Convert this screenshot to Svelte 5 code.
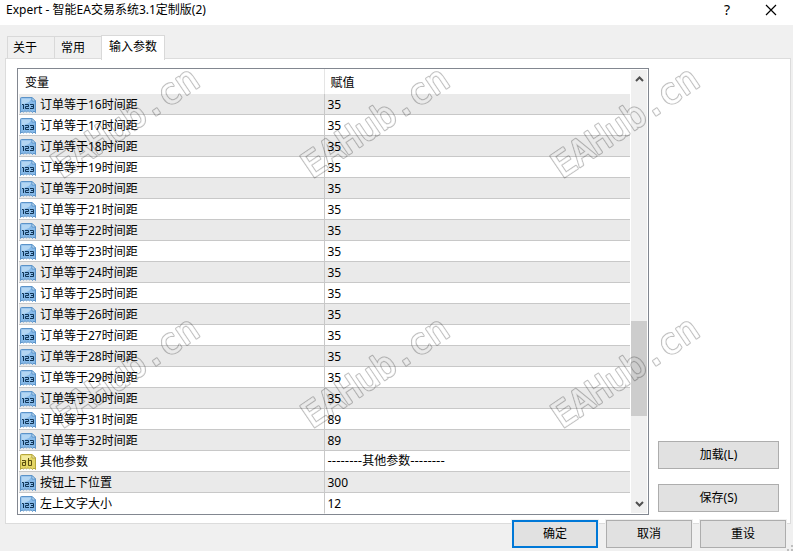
<script lang="ts">
	type Param = { name: string; value: string; kind: 'int' | 'text' };

	const params: Param[] = [];
	for (let i = 16; i <= 32; i++) {
		params.push({ name: `订单等于${i}时间距`, value: i > 30 ? '89' : '35', kind: 'int' });
	}
	params.push({ name: '其他参数', value: '--------其他参数--------', kind: 'text' });
	params.push({ name: '按钮上下位置', value: '300', kind: 'int' });
	params.push({ name: '左上文字大小', value: '12', kind: 'int' });

	const tabs = ['关于', '常用', '输入参数'];
	let active: number = $state(2);

	const marks = [0, 250].flatMap((y) => [0, 250, 500].map((x) => ({ x, y })));
</script>

<div class="dialog">
	<header>
		<h1>Expert - 智能EA交易系统3.1定制版(2)</h1>
		<button class="caption" aria-label="帮助">?</button>
		<button class="caption" aria-label="关闭">
			<svg width="12" height="12" viewBox="0 0 12 12">
				<path d="M1 1L11 11M11 1L1 11" fill="none" stroke="#000" stroke-width="1.2" />
			</svg>
		</button>
	</header>

	<div class="tabs" role="tablist">
		{#each tabs as tab, i}
			<button
				role="tab"
				aria-selected={active === i}
				class:active={active === i}
				onclick={() => (active = i)}>{tab}</button
			>
		{/each}
	</div>

	<main>
		<div class="list">
			<table>
				<thead>
					<tr><th class="name">变量</th><th>赋值</th></tr>
				</thead>
				<tbody>
					{#each params as param}
						<tr>
							<td class="name">
								<div class="label">
									<svg width="16" height="16" viewBox="0 0 16 16" class={param.kind}>
										<path
											class="page"
											d="M.5 1.5Q.5.5 1.5.5H12L15.5 4V15.5L14 14L12.5 15.5L11 13.8L9.5 14.8L8 13.8L6.5 14.8L5 13.8L3.5 15L2 14L.5 15.5Z"
										/>
										<path class="shine" d="M1.5 1.5H11.5L9 5L1.5 8Z" />
										<path class="fold" d="M12 .5V4H15.5Z" />
										{#if param.kind === 'int'}
											<path
												class="glyph"
												d="M2 7.5H3.5V12M5 7.5H8.5V9.5H5.5V11.5H9M10 7.5H13.5V11.5H10M11 9.5H13.5"
											/>
										{:else}
											<path
												class="glyph"
												d="M2 6.5H5.5V11.5H2.5V8.5H5.5M8.5 4V11.5H11.5V6.5H8.5"
											/>
										{/if}
									</svg>
									{param.name}
								</div>
							</td>
							<td class={param.kind}>{param.value}</td>
						</tr>
					{/each}
				</tbody>
			</table>

			<div class="scrollbar">
				<button aria-label="向上">
					<svg width="9" height="6" viewBox="0 0 9 6"><path d="M1 5L4.5 1.5L8 5" /></svg>
				</button>
				<div class="before"></div>
				<div class="thumb"></div>
				<div class="after"></div>
				<button aria-label="向下">
					<svg width="9" height="6" viewBox="0 0 9 6"><path d="M1 1L4.5 4.5L8 1" /></svg>
				</button>
			</div>
		</div>

		<div class="side">
			<button class="push">加载(L)</button>
			<button class="push">保存(S)</button>
		</div>
	</main>

	<footer>
		<button class="push default">确定</button>
		<button class="push">取消</button>
		<button class="push">重设</button>
	</footer>

	<svg class="grip" width="6" height="6" viewBox="0 0 6 6" aria-hidden="true">
		<path d="M4 0H6V2H4ZM4 4H6V6H4ZM0 4H2V6H0Z" fill="#bfbfbf" />
	</svg>

	<svg class="watermark" aria-hidden="true">
		<defs>
			<!-- a hollow outline running around the letters -->
			<mask id="hollow" maskUnits="userSpaceOnUse" x="-10" y="-40" width="200" height="60">
				<text fill="#fff" stroke="#fff" stroke-width="2.4">EAHub.cn</text>
				<text fill="#000" stroke="#000" stroke-width="0.4">EAHub.cn</text>
			</mask>
		</defs>
		{#each marks as mark}
			<g transform="translate({mark.x + 62} {mark.y + 179}) rotate(-34)">
				<rect x="-10" y="-40" width="200" height="60" mask="url(#hollow)" />
			</g>
		{/each}
	</svg>
</div>

<style>
	:global(body) {
		margin: 0;
		background: #f0f0f0;
	}

	.dialog {
		position: relative;
		display: flex;
		flex-direction: column;
		min-height: 100vh;
		box-sizing: border-box;
		overflow: hidden;
		background: #f0f0f0;
		color: #000;
		font: 12px/20px 'Noto Sans', 'Noto Sans CJK SC', sans-serif;
	}

	button {
		margin: 0;
		padding: 0;
		border: 0;
		background: none;
		color: inherit;
		font: inherit;
	}

	header {
		display: flex;
		align-items: center;
		height: 25px;
		background: #fff;
	}

	h1 {
		flex: 1;
		margin: 0 0 5px 6px;
		font: inherit;
	}

	.caption {
		display: flex;
		align-items: center;
		justify-content: center;
		width: 44px;
		height: 20px;
		margin-bottom: 6px;
		font-size: 14px;
	}

	.tabs {
		display: flex;
		align-items: flex-end;
		height: 25px;
		padding: 9px 7px 0;
	}

	.tabs button {
		height: 23px;
		padding: 0 17px 0 5px;
		border: 1px solid #d9d9d9;
		border-width: 1px 0 0 1px;
		text-align: left;
	}

	.tabs button + button {
		padding-left: 6px;
		padding-right: 16px;
	}

	.tabs .active {
		position: relative;
		height: 25px;
		margin-bottom: -1px;
		padding: 0 7px 2px !important;
		border-right-width: 1px;
		background: #fff;
	}

	main {
		display: flex;
		gap: 9px;
		margin: -1px 2px 0 5px;
		padding: 9px 11px 8px 11px;
		border: 1px solid #dcdcdc;
		background: #fff;
	}

	.list {
		display: flex;
		flex: 1;
		gap: 1px;
		padding: 0 1px;
		border: 1px solid #828790;
	}

	table {
		flex: 1;
		border-collapse: separate;
		border-spacing: 0;
		table-layout: fixed;
	}

	th,
	td {
		box-sizing: border-box;
		height: 21px;
		padding: 1px 3px 0;
		border-bottom: 1px solid #c8c8c8;
		line-height: 19px;
		text-align: left;
		font-weight: normal;
		white-space: nowrap;
	}

	th {
		height: 25px;
		padding: 1px 6px 0;
		border-bottom: 0;
	}

	.name {
		width: 50%;
		border-right: 1px solid #c8c8c8;
	}

	th.name {
		border-right-color: #e5e5e5;
	}

	td.name {
		padding-left: 1px;
	}

	td.text {
		font-family: 'DejaVu Sans', 'Noto Sans CJK SC', sans-serif;
	}

	tbody tr:nth-child(odd) {
		background: #eaeaea;
	}

	tbody tr:last-child td {
		border-bottom-color: transparent;
	}

	.label {
		display: flex;
		align-items: center;
		gap: 4px;
		height: 19px;
	}

	.page {
		fill: #86b9e8;
		stroke: #5b93c8;
	}

	.shine {
		fill: #b3d6f3;
	}

	.fold {
		fill: #e0effb;
		stroke: #5b93c8;
	}

	.glyph {
		fill: none;
		stroke: #0f3557;
		stroke-width: 1;
	}

	.text .page {
		fill: #e3d565;
		stroke: #b5a63c;
	}

	.text .shine {
		fill: #f3eba0;
	}

	.text .fold {
		fill: #fbf8d8;
		stroke: #b5a63c;
	}

	.text .glyph {
		stroke: #5a4f10;
	}

	.scrollbar {
		display: flex;
		flex-direction: column;
		width: 16px;
		margin: 1px 0;
		background: #f0f0f0;
	}

	.scrollbar button {
		display: flex;
		align-items: center;
		justify-content: center;
		height: 18px;
	}

	.scrollbar path {
		fill: none;
		stroke: #505050;
		stroke-width: 2;
	}

	.before {
		flex: 233;
	}

	.thumb {
		flex: 95;
		background: #cdcdcd;
	}

	.after {
		flex: 79;
	}

	.side {
		display: flex;
		flex-direction: column;
		justify-content: flex-end;
		gap: 15px;
		width: 121px;
		padding-bottom: 3px;
	}

	.push {
		height: 28px;
		border: 1px solid #adadad;
		background: #e1e1e1;
	}

	footer {
		position: relative;
		display: flex;
		justify-content: flex-end;
		gap: 8px;
		margin-top: -4px;
		padding: 0 7px 3px;
	}

	footer .push {
		width: 86px;
		box-shadow: 0 0 0 1px #f0f0f0;
	}

	.default {
		border: 2px solid #0078d7;
	}

	.grip {
		position: absolute;
		right: 0;
		bottom: 0;
	}

	.watermark {
		position: absolute;
		inset: 0;
		width: 100%;
		height: 100%;
		pointer-events: none;
	}

	.watermark text {
		font: 35px 'DejaVu Sans Mono', monospace;
		stroke-linejoin: round;
	}

	.watermark rect {
		fill: #000;
		fill-opacity: 0.25;
	}
</style>
